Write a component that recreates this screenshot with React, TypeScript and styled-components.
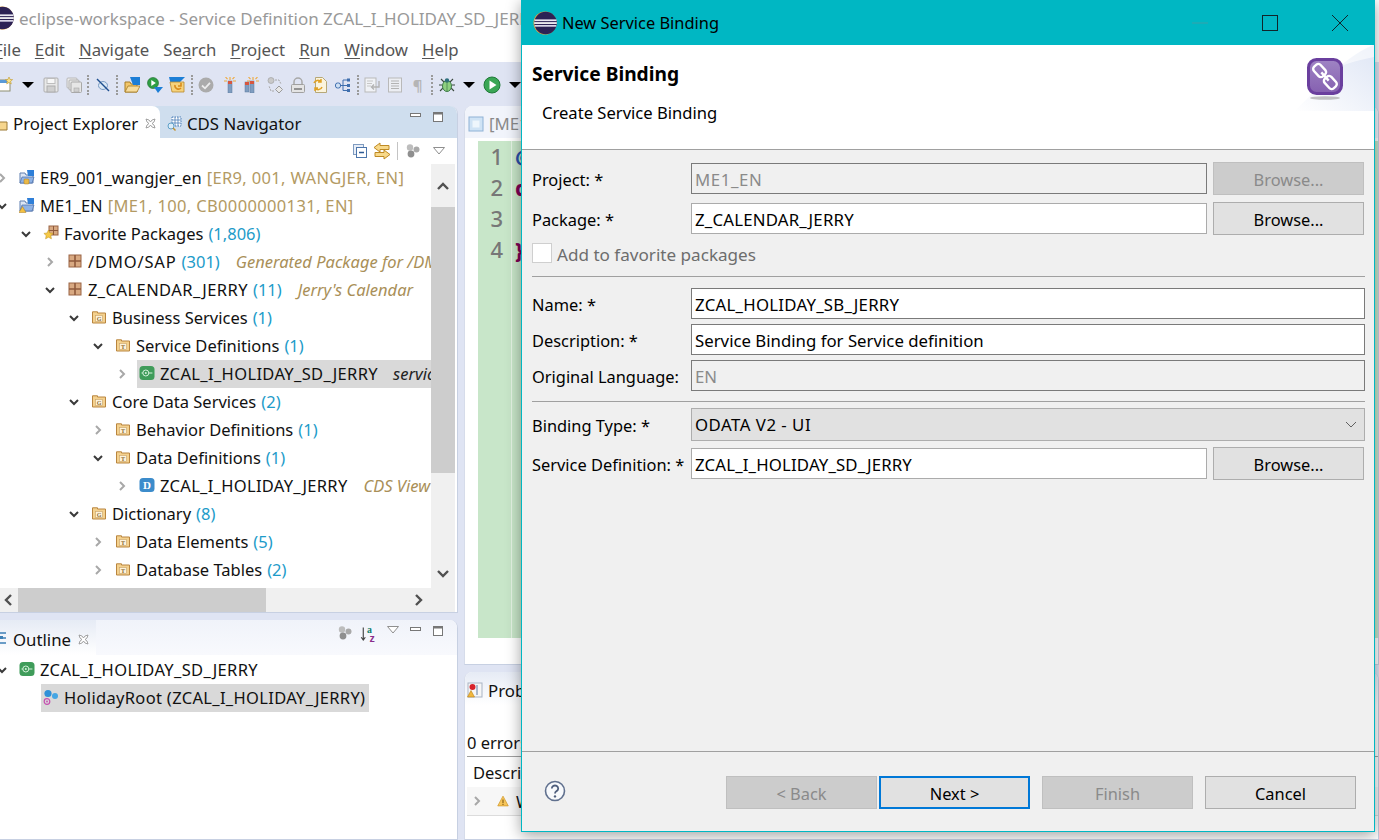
import React from "react";
import styled, { createGlobalStyle } from "styled-components";

const GlobalStyle = createGlobalStyle`
  html, body { margin: 0; padding: 0; background: #dfe4f3; }
  body { font-family: "Noto Sans", "Open Sans", sans-serif; font-size: 16.5px; color: #111; }
`;

const Page = styled.div`
  position: relative;
  width: 1379px;
  height: 840px;
  overflow: hidden;
  display: flex;
  flex-direction: column;
  background: #dfe4f3;
`;

/* ---------- workbench chrome ---------- */

const TitleBar = styled.div`
  height: 36px;
  background: #fff;
  display: flex;
  align-items: center;
  gap: 5px;
  font-size: 17px;
  color: #999;
  white-space: nowrap;
  overflow: hidden;
  svg { margin-left: -10px; }
`;

const MenuBar = styled.div`
  height: 26px;
  background: #fff;
  display: flex;
  align-items: center;
  gap: 14px;
  font-size: 16.8px;
  color: #555;
  span:first-child { margin-left: -6px; }
  u { text-underline-offset: 2px; }
`;

const Toolbar = styled.div`
  height: 44px;
  box-sizing: border-box;
  padding-top: 2px;
  display: flex;
  align-items: center;
  margin-left: -6px;
`;

const ToolSlot = styled.span`
  width: 22.8px;
  height: 22px;
  flex: none;
  display: flex;
  align-items: center;
  justify-content: center;
`;

const ToolSep = styled.span`
  width: 6.2px;
  height: 20px;
  flex: none;
  display: flex;
  justify-content: center;
  &::before {
    content: "";
    border-left: 2px dotted #9a9a9a;
  }
`;

const Pilcrow = styled.span`
  font-size: 15px;
  font-weight: 700;
  color: #b5b5b5;
`;

const Workspace = styled.div`
  flex: 1;
  min-height: 0;
  display: grid;
  grid-template-columns: 458px 1fr;
  gap: 6px;
`;

const Column = styled.div<{ $gap: number }>`
  display: flex;
  flex-direction: column;
  min-height: 0;
  min-width: 0;
  gap: ${({ $gap }) => $gap}px;
`;

const Panel = styled.section<{ $h?: number }>`
  ${({ $h }) => ($h ? `height: ${$h}px; flex: none;` : "flex: 1;")}
  min-height: 0;
  background: #fff;
  border-right: 1px solid #c7d0e2;
  border-bottom: 1px solid #c7d0e2;
  border-top-right-radius: 8px;
  box-sizing: border-box;
  display: flex;
  flex-direction: column;
  overflow: hidden;
`;

const EditorPanel = styled(Panel)`
  border-left: 1px solid #d6dcea;
  border-top-left-radius: 8px;
`;

const TabStrip = styled.div<{ $bg: string; $h: number }>`
  height: ${({ $h }) => $h}px;
  flex: none;
  display: flex;
  align-items: stretch;
  background: ${({ $bg }) => $bg};
`;

const Tab = styled.div<{ $active?: boolean; $bg?: string; $w: number; $pad?: number }>`
  width: ${({ $w }) => $w}px;
  box-sizing: border-box;
  flex: none;
  display: flex;
  align-items: center;
  gap: 5px;
  padding-top: 3px;
  padding-left: ${({ $pad }) => $pad || 0}px;
  white-space: nowrap;
  font-size: 16.8px;
  background: ${({ $active, $bg }) => $bg || ($active ? "#fff" : "transparent")};
  border-top-right-radius: ${({ $active }) => ($active ? "8px" : "0")};
`;

const TabClose = styled.span`
  margin-left: 2px;
  display: flex;
`;

const ViewActions = styled.div<{ $top: number }>`
  margin-left: auto;
  display: flex;
  align-items: flex-start;
  padding: ${({ $top }) => $top}px 13px 0 0;
  gap: 10px;
`;

const ViewBar = styled.div`
  height: 26px;
  flex: none;
  display: flex;
  justify-content: flex-end;
  align-items: center;
  padding-right: 11px;
  gap: 5px;
`;

const ViewBarSep = styled.span`
  width: 1px;
  height: 18px;
  background: #c4c4c4;
  margin: 0 2px 0 1px;
`;

const ViewBarMenu = styled.span`
  margin-left: 6px;
  display: flex;
`;

/* ---------- tree ---------- */

const TreeArea = styled.div`
  flex: 1;
  min-height: 0;
  display: grid;
  grid-template-columns: 431px 24px;
`;

const Tree = styled.div`
  min-width: 0;
  overflow: hidden;
`;

const Row = styled.div<{ $level: number }>`
  height: 28px;
  display: flex;
  align-items: center;
  margin-left: -6px;
  padding-left: ${({ $level }) => $level * 24}px;
  white-space: nowrap;
`;

const Toggle = styled.span`
  width: 16px;
  flex: none;
  display: flex;
  justify-content: center;
  margin-right: 2px;
`;

const Item = styled.span<{ $selected?: boolean; $fill?: boolean }>`
  height: 28px;
  box-sizing: border-box;
  margin-left: 5px;
  padding: 0 4px 2px 2px;
  display: flex;
  align-items: center;
  overflow: hidden;
  flex: ${({ $fill }) => ($fill ? "1" : "none")};
  background: ${({ $selected }) => ($selected ? "#d9d9d9" : "transparent")};
`;

const ItemIcon = styled.span`
  width: 16px;
  margin-right: 5px;
  flex: none;
  display: flex;
  justify-content: center;
`;

const Name = styled.span<{ $track?: number }>`
  letter-spacing: ${({ $track }) => $track || 0}px;
`;

const Count = styled.span`
  color: #1d9bc9;
  margin-left: 5px;
`;

const Note = styled.span<{ $italic?: boolean }>`
  color: ${({ $italic }) => ($italic ? "#a98f58" : "#b39a63")};
  font-style: ${({ $italic }) => ($italic ? "italic" : "normal")};
  letter-spacing: ${({ $italic }) => ($italic ? "0" : ".35px")};
  margin-left: ${({ $italic }) => ($italic ? "16px" : "5px")};
`;

const StrongNote = styled.span`
  color: #222;
  font-style: italic;
  margin-left: 15px;
`;

const VScroll = styled.div`
  background: #f0f0f0;
  display: flex;
  flex-direction: column;
  height: 424px;
`;

const ScrollButton = styled.div`
  height: 43px;
  flex: none;
  display: flex;
  align-items: center;
  justify-content: center;
`;

const VThumb = styled.div`
  height: 266px;
  background: #cdcdcd;
`;

const VRest = styled.div`
  flex: 1;
  display: flex;
  align-items: flex-end;
  justify-content: center;
  padding-bottom: 7px;
`;

const HScroll = styled.div`
  height: 24px;
  width: 455px;
  flex: none;
  background: #f0f0f0;
  display: flex;
  align-items: center;
`;

const HButton = styled.div`
  width: 18px;
  flex: none;
  display: flex;
  justify-content: center;
`;

const HThumb = styled.div`
  width: 248px;
  height: 24px;
  background: #cdcdcd;
`;

const HRest = styled.div`
  flex: 1;
  display: flex;
  justify-content: flex-end;
  padding-right: 30px;
`;

const OutlineTree = styled.div`
  padding-top: 1px;
`;

/* ---------- editor and problems ---------- */

const EditorTabText = styled.span`
  color: #8a8a8a;
`;

const EditorBody = styled.div`
  flex: 1;
  min-height: 0;
  padding: 3px 0 26px 13px;
`;

const Ruler = styled.div`
  height: 100%;
  background: linear-gradient(to right, #c8e6c9 33px, #e3f2e3 33px, #e3f2e3 34px, #c8e6c9 34px);
  display: grid;
  grid-template-columns: 34px 1fr;
  grid-auto-rows: 31px;
  font-size: 22px;
  font-weight: 500;
`;

const LineNo = styled.div`
  color: #777;
  text-align: right;
  padding-right: 9px;
  line-height: 31px;
`;

const Code = styled.div<{ $color: string }>`
  color: ${({ $color }) => $color};
  padding-left: 3px;
  line-height: 31px;
  font-weight: 700;
`;

const ProblemsInfo = styled.div`
  margin: 24px 0 0 2px;
  height: 27px;
  border-bottom: 1px solid #a0a0a0;
  font-size: 16.5px;
  line-height: 28px;
  white-space: nowrap;
`;

const ProblemsHead = styled.div`
  height: 30px;
  padding-left: 8px;
  display: flex;
  align-items: center;
`;

const ProblemsRow = styled.div`
  height: 28px;
  margin-left: 2px;
  background: #f7f7f7;
  border-bottom: 1px solid #dcdcdc;
  display: flex;
  align-items: center;
  gap: 7px;
  padding-left: 4px;
  white-space: nowrap;
  svg + svg { margin-left: 7px; }
`;

const Gradient = "linear-gradient(180deg, #e6ebf5 0%, #fff 100%)";

/* ---------- dialog window ---------- */

const Dialog = styled.div`
  position: absolute;
  left: 521px;
  top: 0;
  width: 854px;
  height: 832px;
  box-sizing: border-box;
  border: 1px solid #00b7c3;
  border-top: 0;
  background: #f0f0f0;
  box-shadow: 0 3px 14px rgba(0, 0, 0, 0.38);
  display: flex;
  flex-direction: column;
  font-size: 16.4px;
  color: #000;
`;

const DialogTitle = styled.div`
  height: 45px;
  flex: none;
  margin: 0 -1px;
  background: #00b7c3;
  display: flex;
  align-items: center;
  padding-left: 12px;
  gap: 5px;
`;

const WinControls = styled.div`
  margin-left: auto;
  display: flex;
  align-self: stretch;
`;

const WinButton = styled.span`
  width: 70px;
  display: flex;
  align-items: center;
  justify-content: center;
`;

const DialogHeader = styled.div`
  height: 105px;
  flex: none;
  box-sizing: border-box;
  background: #fff;
  border-bottom: 1px solid #a0a0a0;
  display: flex;
  justify-content: space-between;
  align-items: flex-start;
`;

const HeaderText = styled.div`
  padding: 16px 0 0 10px;
`;

const HeaderTitle = styled.div`
  font-weight: 700;
  font-size: 19.2px;
  line-height: 26px;
`;

const HeaderSub = styled.div`
  margin: 13px 0 0 10px;
  font-size: 16.6px;
  line-height: 26px;
`;

const Form = styled.div`
  flex: 1;
  min-height: 0;
  padding: 0 9px 0 10px;
`;

const Group = styled.div<{ $top: number; $gap: number }>`
  margin-top: ${({ $top }) => $top}px;
  display: flex;
  flex-direction: column;
  gap: ${({ $gap }) => $gap}px;
`;

const FieldRow = styled.div<{ $h: number; $browse?: boolean }>`
  height: ${({ $h }) => $h}px;
  display: flex;
  align-items: center;
  gap: 6px;
  padding-right: ${({ $browse }) => ($browse ? "1px" : "0")};
`;

const FieldLabel = styled.label`
  width: 159px;
  margin-right: -6px;
  padding-top: 1px;
  flex: none;
  white-space: nowrap;
`;

const TextBox = styled.div<{ $disabled?: boolean; $strong?: boolean; $track?: number }>`
  flex: 1;
  height: 31px;
  box-sizing: border-box;
  border: 1px solid ${({ $strong }) => ($strong ? "#7a7a7a" : "#ababab")};
  background: ${({ $disabled }) => ($disabled ? "#f0f0f0" : "#fff")};
  color: ${({ $disabled }) => ($disabled ? "#8a8a8a" : "#000")};
  padding-left: 3px;
  font-size: 16.8px;
  letter-spacing: ${({ $track }) => $track || 0}px;
  line-height: 31px;
  white-space: nowrap;
`;

const PushButton = styled.button<{ $default?: boolean }>`
  box-sizing: border-box;
  flex: none;
  height: 33px;
  width: 151px;
  padding: 1px 0 0;
  font: inherit;
  color: #000;
  background: #e1e1e1;
  border: ${({ $default }) => ($default ? "2px solid #0078d7" : "1px solid #adadad")};
  &:disabled {
    background: #ccc;
    border-color: #bfbfbf;
    color: #8a8a8a;
  }
`;

const CheckRow = styled.div`
  margin-top: 1px;
  height: 20px;
  display: flex;
  align-items: center;
  gap: 5px;
  color: #6d6d6d;
  font-size: 17.1px;
`;

const CheckText = styled.span`
  padding-top: 3px;
  white-space: nowrap;
`;

const CheckBox = styled.span`
  width: 20px;
  height: 20px;
  box-sizing: border-box;
  background: #fff;
  border: 1px solid #cfcfcf;
`;

const Divider = styled.div<{ $top: number }>`
  height: 1px;
  margin-top: ${({ $top }) => $top}px;
  background: #a0a0a0;
`;

const Combo = styled.div`
  flex: 1;
  height: 33px;
  box-sizing: border-box;
  background: #e1e1e1;
  border: 1px solid #adadad;
  padding: 0 7px 0 3px;
  display: flex;
  align-items: center;
  justify-content: space-between;
  font-size: 16.8px;
  letter-spacing: .5px;
`;

const DialogFooter = styled.div`
  height: 80px;
  flex: none;
  box-sizing: border-box;
  border-top: 1px solid #a0a0a0;
  padding: 24px 18px 0 22px;
  display: flex;
  align-items: flex-start;
`;

const HelpMark = styled.span`
  margin-top: 4px;
  display: flex;
`;

const ButtonBar = styled.div`
  margin-left: auto;
  display: flex;
  gap: 12px;
`;

const ButtonPair = styled.div`
  display: flex;
  gap: 2px;
`;

/* ---------- icons ---------- */

const Ico = styled.svg`
  width: 16px;
  height: 16px;
  flex: none;
  display: block;
`;

const ClippedIco = styled(Ico)`
  margin-left: -8px;
`;

const SmallIco = styled(Ico)`
  width: 12px;
  height: 12px;
`;

const SortGlyph = styled.svg`
  width: 18px;
  height: 18px;
  flex: none;
  margin-right: 1px;
`;

const MenuCluster = styled.span`
  display: flex;
  align-items: flex-start;
  gap: 7px;
`;

const EclipseLogo = () => (
  <svg width="24" height="24" viewBox="0 0 24 24">
    <circle cx="12" cy="12" r="11.5" fill="#e8a33d" />
    <circle cx="12.6" cy="12" r="11.2" fill="#2c2255" />
    <rect x="1.5" y="8.4" width="22" height="1.7" fill="#e9e7f2" />
    <rect x="1.2" y="11.2" width="22.6" height="1.7" fill="#fff" />
    <rect x="1.7" y="14" width="21.6" height="1.7" fill="#d9d6e8" />
  </svg>
);

const Chevron = ({ open, dark }: { open?: boolean; dark?: boolean }) => (
  <svg width="12" height="12" viewBox="0 0 12 12">
    <path
      d={open ? "M2 4l4 4 4-4" : "M4 2l4 4-4 4"}
      fill="none"
      stroke={open || dark ? "#3a3a3a" : "#a8a8a8"}
      strokeWidth="2"
    />
  </svg>
);

const ScrollArrow = ({ d }: { d: string }) => (
  <svg width="14" height="14" viewBox="0 0 14 14">
    <path d={d} fill="none" stroke="#505050" strokeWidth="2.4" />
  </svg>
);

const FolderLetter = ({ letter }: { letter: string }) => (
  <Ico viewBox="0 0 16 16">
    <path d="M1.5 4V2.8h5V4h8v10h-13z" fill="#f4d18e" stroke="#b9853e" />
    <rect x="4.5" y="6.5" width="7" height="6" fill="#fdf3dc" stroke="#c9a468" strokeWidth=".6" />
    <text x="8" y="11.6" fontSize="6" fontFamily="Liberation Serif, serif" fontWeight="700" textAnchor="middle" fill="#8a6a30">
      {letter}
    </text>
  </Ico>
);

const PackageIcon = () => (
  <Ico viewBox="0 0 16 16">
    <rect x="2" y="2" width="12" height="12" fill="#d8a982" stroke="#9a6444" />
    <path d="M8 2v12M2 8h12" stroke="#8f5a3c" strokeWidth="1.6" />
  </Ico>
);

const FavoriteIcon = () => (
  <Ico viewBox="0 0 16 16">
    <rect x="6" y="1" width="9" height="9" fill="#d8a982" stroke="#9a6444" />
    <path d="M10.5 1v9M6 5.5h9" stroke="#8f5a3c" />
    <path d="M5.5 5l1.4 3 3.2.4-2.3 2.2.6 3.2-2.9-1.6-2.9 1.6.6-3.2L.9 8.4 4.1 8z" fill="#f6c945" stroke="#c59a2a" strokeWidth=".6" />
  </Ico>
);

const ProjectIcon = ({ warn }: { warn?: boolean }) => (
  <Ico viewBox="0 0 16 16">
    <path d="M1 4h5l1 2h7v8H1z" fill="#dce6f5" stroke="#5f7fb0" />
    <path d="M8 1h7v6H9z" fill="#2f7fd8" />
    <path d="M3 8h12l-2 6H1z" fill="#8fb3e6" stroke="#4a6ea8" strokeWidth=".7" />
    {warn ? (
      <path d="M3.5 9.5L7 15.5H0z" fill="#f3c143" stroke="#a87a1e" strokeWidth=".5" />
    ) : (
      <rect x="5" y="10" width="5" height="5" rx="1" fill="#e9b949" stroke="#a87a1e" strokeWidth=".5" />
    )}
  </Ico>
);

const ServiceIcon = () => (
  <Ico viewBox="0 0 16 16">
    <rect x=".5" y="1" width="15" height="14" rx="3.5" fill="#3f9c5a" />
    <circle cx="6.8" cy="8" r="3" fill="none" stroke="#d3f0da" />
    <circle cx="6.8" cy="8" r="1" fill="#d3f0da" />
    <path d="M2.5 8h1.4M9.8 8h3.6" stroke="#d3f0da" />
  </Ico>
);

const DataDefIcon = () => (
  <Ico viewBox="0 0 16 16">
    <rect x=".5" y="1" width="15" height="14" rx="3.5" fill="#3c8ccb" />
    <text x="8" y="12" fontSize="11" fontWeight="700" fontFamily="Liberation Serif, serif" textAnchor="middle" fill="#fff">
      D
    </text>
  </Ico>
);

const HolidayIcon = () => (
  <Ico viewBox="0 0 16 16">
    <circle cx="5" cy="4.5" r="3.6" fill="#2f90d8" />
    <circle cx="12" cy="7" r="3" fill="#45a6e4" />
    <circle cx="4" cy="12.5" r="2.8" fill="none" stroke="#c650b0" strokeWidth="1.2" />
    <circle cx="4" cy="12.5" r=".9" fill="#c650b0" />
  </Ico>
);

const FolderTab = () => (
  <ClippedIco viewBox="0 0 16 16">
    <path d="M1 4h5l1 2h8v8H1z" fill="#f6d68e" stroke="#9c7a34" />
  </ClippedIco>
);

const CdsIcon = () => (
  <Ico viewBox="0 0 16 16">
    <path d="M6 1h9v9H6z" fill="#fff" stroke="#4b7fb8" strokeDasharray="1.5 1" />
    <path d="M9 1v9M12 1v9M6 4h9M6 7h9" stroke="#4b7fb8" strokeWidth=".8" />
    <circle cx="5" cy="10" r="3" fill="#dcecf8" stroke="#5ea0c8" />
    <path d="M7 12l2.5 2.5" stroke="#c28f2e" strokeWidth="1.4" />
  </Ico>
);

const OutlineTabIcon = () => (
  <ClippedIco viewBox="0 0 16 16">
    <path d="M2 2h5M2 7h12M9 7v0M8 12h6M8 2h6" stroke="#3d7fb5" strokeWidth="1.6" />
    <rect x="8" y="5" width="3" height="3" fill="#3d7fb5" />
  </ClippedIco>
);

const CloseX = () => (
  <svg width="11" height="11" viewBox="0 0 11 11">
    <path d="M1 1l3 1 1.5 2 1.5-2 3-1-1 3-2 1.5 2 1.5 1 3-3-1-1.5-2-1.5 2-3 1 1-3 2-1.5-2-1.5z" fill="#fff" stroke="#8d8d8d" strokeWidth=".8" />
  </svg>
);

const MinIcon = () => (
  <svg width="12" height="12" viewBox="0 0 12 12">
    <rect x=".5" y="2.5" width="10" height="3" fill="#fff" stroke="#777" />
  </svg>
);

const MaxIcon = () => (
  <svg width="12" height="12" viewBox="0 0 12 12">
    <rect x="1.5" y="1.5" width="9" height="9" fill="#fff" stroke="#777" />
    <path d="M1.5 2.5h9" stroke="#777" strokeWidth="2" />
  </svg>
);

const MenuTriangle = () => (
  <svg width="14" height="10" viewBox="0 0 14 10">
    <path d="M1.5 1.5h11L7 8z" fill="#fff" stroke="#8f8f8f" />
  </svg>
);

const ClusterIcon = () => (
  <Ico viewBox="0 0 16 16">
    <circle cx="5" cy="4.5" r="3.2" fill="#bdbdbd" />
    <circle cx="11.5" cy="6.5" r="3" fill="#a9a9a9" />
    <circle cx="6" cy="11" r="3.4" fill="#8f8f8f" />
  </Ico>
);

const SortIcon = () => (
  <SortGlyph viewBox="0 0 22 22">
    <path d="M4 3v15M1.5 15L4 18.5 6.5 15" fill="none" stroke="#444" strokeWidth="1.4" />
    <text x="8.5" y="10" fontSize="12" fontWeight="700" fontFamily="Liberation Serif, serif" fill="#0e7c6b">a</text>
    <text x="11.5" y="21" fontSize="13" fontWeight="700" fontFamily="Liberation Sans, sans-serif" fill="#8a2d8c">z</text>
  </SortGlyph>
);

const CollapseIcon = () => (
  <Ico viewBox="0 0 16 16">
    <rect x="1.5" y="1.5" width="10" height="10" fill="#e8eef7" stroke="#7f9bc0" />
    <rect x="4.5" y="4.5" width="10" height="10" fill="#fff" stroke="#4d76ab" />
    <path d="M7 9.5h5" stroke="#2d5a94" strokeWidth="1.4" />
  </Ico>
);

const LinkIcon = () => (
  <svg width="18" height="18" viewBox="0 0 18 18">
    <path d="M7 1L1 5.5 7 10V7.5h9v-4H7z" fill="#f8d98a" stroke="#bf8a24" />
    <path d="M11 8l6 4.5-6 4.5v-2.5H2v-4h9z" fill="#f8d98a" stroke="#bf8a24" />
  </svg>
);

const NewIcon = () => (
  <Ico viewBox="0 0 16 16">
    <rect x="1" y="3" width="12" height="11" fill="#fff" stroke="#8e8e70" />
    <rect x="1" y="3" width="12" height="3" fill="#5a9ad8" />
    <path d="M12 0l1 2.4 2.6.2-2 1.7.7 2.6L12 5.5 9.7 6.9l.7-2.6-2-1.7 2.6-.2z" fill="#fbe38a" stroke="#c29a2e" strokeWidth=".6" />
  </Ico>
);

const BlackDrop = () => (
  <svg width="12" height="6" viewBox="0 0 12 6">
    <path d="M0 0h12L6 6z" fill="#000" />
  </svg>
);

const SaveIcon = () => (
  <Ico viewBox="0 0 16 16">
    <rect x="1" y="1" width="14" height="14" rx="1" fill="#e8e8e8" stroke="#aeaeae" />
    <rect x="4" y="1.5" width="8" height="5" fill="#f7f7f7" stroke="#bdbdbd" />
    <rect x="4" y="9" width="8" height="6" fill="#cfcfcf" stroke="#aeaeae" />
  </Ico>
);

const SaveAllIcon = () => (
  <Ico viewBox="0 0 16 16">
    <rect x="1" y="1" width="10" height="10" rx="1" fill="#ededed" stroke="#b8b8b8" />
    <rect x="3" y="3" width="10" height="10" rx="1" fill="#e8e8e8" stroke="#b0b0b0" />
    <rect x="5" y="5" width="10.5" height="10.5" rx="1" fill="#e6e6e6" stroke="#a8a8a8" />
    <rect x="8" y="11" width="5" height="4" fill="#cfcfcf" stroke="#a8a8a8" strokeWidth=".6" />
  </Ico>
);

const MarkIcon = () => (
  <Ico viewBox="0 0 16 16">
    <ellipse cx="8" cy="8.5" rx="4.5" ry="4" fill="#dbe8f5" stroke="#7b9cc4" />
    <path d="M2 2l12 12" stroke="#1f4f8f" strokeWidth="1.4" />
  </Ico>
);

const OpenFolderIcon = () => (
  <Ico viewBox="0 0 16 16">
    <path d="M1 5h5l1 2h6v8H1z" fill="#f2c66b" stroke="#a67c25" />
    <path d="M4 9h12l-3 6H1z" fill="#f7dc9c" stroke="#a67c25" strokeWidth=".8" />
    <path d="M6 0h10v8H9z" fill="#1c7ed6" />
  </Ico>
);

const RunLastIcon = () => (
  <Ico viewBox="0 0 16 16">
    <circle cx="6" cy="6" r="5.5" fill="#2f9e44" stroke="#1c6b2c" strokeWidth=".6" />
    <path d="M4.3 3l4.500 3-4.500 3z" fill="#fff" />
    <path d="M7 10h9l-5 6z" fill="#1c7ed6" />
  </Ico>
);

const SyncFolderIcon = () => (
  <Ico viewBox="0 0 16 16">
    <path d="M0 0h16l-8 8H2z" fill="#1c7ed6" />
    <path d="M1 5h14v10H3z" fill="#f6d27c" stroke="#b7892c" strokeWidth=".8" />
    <path d="M6 8a3.5 3.5 0 0 0 6 3M12 6v3H9" fill="none" stroke="#d98b1b" strokeWidth="1.6" />
  </Ico>
);

const CheckGreyIcon = () => (
  <Ico viewBox="0 0 16 16">
    <circle cx="8" cy="8" r="7.5" fill="#ababab" />
    <path d="M4 8.5l3 2.8 5-5.500" fill="none" stroke="#ececec" strokeWidth="1.8" />
  </Ico>
);

const Sparks = () => (
  <path d="M9 0v3M9 7v2M3 4h3M12 4h3M4.5 0l2 2.2M13.5 0l-2 2.2" stroke="#efa838" strokeWidth="1.1" />
);

const WandIcon = () => (
  <Ico viewBox="0 0 16 16">
    <Sparks />
    <rect x="7" y="4" width="4" height="12" fill="#7f9dc0" stroke="#5c7a9c" strokeWidth=".5" />
    <rect x="7" y="4" width="4" height="3" fill="#d8563e" />
  </Ico>
);

const Wand2Icon = () => (
  <Ico viewBox="0 0 16 16">
    <Sparks />
    <rect x="1" y="5" width="4" height="10" fill="#7f9dc0" stroke="#5c7a9c" strokeWidth=".5" />
    <rect x="6" y="4" width="4" height="12" fill="#7f9dc0" stroke="#5c7a9c" strokeWidth=".5" />
    <rect x="1" y="5" width="4" height="3" fill="#d8563e" />
    <rect x="6" y="4" width="4" height="3" fill="#d8563e" />
  </Ico>
);

const NodesIcon = () => (
  <Ico viewBox="0 0 16 16">
    <circle cx="4" cy="3.5" r="3" fill="#c9c9c9" stroke="#9a9a9a" strokeWidth=".6" />
    <path d="M12 9l3.5 3.5L12 16l-3.5-3.5z" fill="#e7e7e7" stroke="#9a9a9a" />
    <path d="M8 3h4l2 4M7 14H4L2 9" fill="none" stroke="#a8a8a8" strokeDasharray="2 1" />
  </Ico>
);

const LockIcon = () => (
  <Ico viewBox="0 0 16 16">
    <path d="M4 8V5a4 4 0 0 1 8 0v3" fill="none" stroke="#a8a8a8" strokeWidth="1.5" />
    <rect x="1.5" y="7.5" width="13" height="8" rx="1" fill="#e4e4e4" stroke="#a0a0a0" />
    <path d="M4 12h8" stroke="#8a8a8a" strokeWidth="1.8" />
  </Ico>
);

const DocSyncIcon = () => (
  <Ico viewBox="0 0 16 16">
    <path d="M3.5.5h7l4 4v11h-11z" fill="#fbf4dd" stroke="#b6a878" />
    <path d="M2 6a4 4 0 0 1 7-1M9 2v3H6M10 10a4 4 0 0 1-7 1M3 14v-3h3" fill="none" stroke="#e0a125" strokeWidth="1.5" />
  </Ico>
);

const TreeOutIcon = () => (
  <Ico viewBox="0 0 16 16">
    <rect x=".5" y="6" width="5" height="5" rx="2" fill="#cfe0f3" stroke="#3f6fae" />
    <path d="M5.5 8.5h8M8 8.5V3h5M8 8.5v5h5" fill="none" stroke="#3f6fae" />
    <rect x="12" y="1.5" width="3" height="3" fill="#3f6fae" />
    <rect x="12" y="7" width="3" height="3" fill="#3f6fae" />
    <rect x="12" y="12" width="3" height="3" fill="#3f6fae" />
  </Ico>
);

const DocArrowIcon = () => (
  <Ico viewBox="0 0 16 16">
    <rect x="1" y="1" width="11" height="14" fill="#f0f2f6" stroke="#b9b9b9" />
    <path d="M3 4h6M3 6.5h5M3 9h4" stroke="#c6c6c6" />
    <path d="M15 4v6H8M10 7.5L7.5 10l2.5 2.5" fill="none" stroke="#b3b3b3" strokeWidth="1.4" />
  </Ico>
);

const ListDocIcon = () => (
  <Ico viewBox="0 0 16 16">
    <rect x="1.5" y="1" width="13" height="14" fill="#eceef3" stroke="#b9b9b9" />
    <path d="M4 4h8M4 6.5h8M4 9h8M4 11.5h8" stroke="#b3b3b3" />
  </Ico>
);

const BugIcon = () => (
  <svg width="18" height="18" viewBox="0 0 18 18">
    <path d="M3 3l3 3M15 3l-3 3M1 9h3M17 9h-3M2 15l3-3M16 15l-3-3" stroke="#3b4a3f" strokeWidth="1.1" />
    <ellipse cx="9" cy="10" rx="4.5" ry="5.5" fill="#8ed07f" stroke="#3f7a4a" />
    <circle cx="9" cy="4.5" r="2.2" fill="#2e6f7d" />
    <path d="M9 5v10" stroke="#3f7a4a" strokeWidth=".7" />
  </svg>
);

const PlayIcon = () => (
  <svg width="18" height="18" viewBox="0 0 18 18">
    <circle cx="9" cy="9" r="8" fill="#3aa655" stroke="#1f7a38" />
    <path d="M6.5 4.5l7 4.5-7 4.5z" fill="#fff" />
  </svg>
);

const ProblemsIcon = () => (
  <Ico viewBox="0 0 16 16">
    <rect x="1" y="1" width="14" height="14" fill="#f6f6f6" stroke="#a9b4c4" />
    <circle cx="5.5" cy="5" r="3" fill="#d8232a" />
    <path d="M4 8.5l3.5 6.5H.5z" fill="#f1b73c" stroke="#b88214" strokeWidth=".6" />
    <path d="M10 3v10" stroke="#8aa0bc" strokeWidth="1.4" />
  </Ico>
);

const WarnIcon = () => (
  <SmallIco viewBox="0 0 16 16">
    <path d="M8 1.5l7 13H1z" fill="#f7c65a" stroke="#d29a2a" strokeLinejoin="round" />
    <path d="M8 6v4.5M8 11.8v1.4" stroke="#7a5510" strokeWidth="1.4" />
  </SmallIco>
);

const EditorTabIcon = () => (
  <Ico viewBox="0 0 16 16">
    <rect x="1" y="1" width="14" height="14" fill="#cfe3f5" stroke="#8fb2d6" />
    <rect x="4.5" y="4.5" width="7" height="7" fill="#eef6fc" />
  </Ico>
);

const WinGlyph = ({ kind }: { kind: "min" | "max" | "close" }) => (
  <svg width="18" height="18" viewBox="0 0 18 18">
    {kind === "min" && <path d="M1 9h16" stroke="#3aa0a8" strokeWidth="1" />}
    {kind === "max" && <rect x="1.5" y="1.5" width="15" height="15" fill="none" stroke="#10252a" />}
    {kind === "close" && <path d="M1 1l16 16M17 1L1 17" stroke="#10252a" />}
  </svg>
);

const BindingBanner = () => (
  <svg width="80" height="66" viewBox="0 0 80 66">
    <defs>
      <linearGradient id="blob" x1="0" y1="1" x2="1" y2="0">
        <stop offset="0" stopColor="#fff" />
        <stop offset="1" stopColor="#dfe6f5" />
      </linearGradient>
      <linearGradient id="tile" x1="0" y1="0" x2="0" y2="1">
        <stop offset="0" stopColor="#9f84c4" />
        <stop offset="1" stopColor="#8560b0" />
      </linearGradient>
    </defs>
    <path d="M0 66C22 48 44 14 80 0v66z" fill="url(#blob)" />
    <path d="M30 30C44 20 62 16 80 12V0C58 8 42 18 30 30z" fill="#fff" opacity=".55" />
    <ellipse cx="31" cy="53" rx="15" ry="1.8" fill="#a9a9a9" opacity=".7" />
    <rect x="14.5" y="14.5" width="33" height="34" rx="8" fill="url(#tile)" stroke="#6a3f9e" strokeWidth="3" />
    <g fill="none" stroke="#fff" strokeWidth="2.4" transform="rotate(-42 31 31.5)">
      <rect x="26.5" y="17" width="9" height="13" rx="3" />
      <rect x="26.5" y="33" width="9" height="13" rx="3" />
      <path d="M31 26v11" />
    </g>
  </svg>
);

const HelpIcon = () => (
  <svg width="22" height="22" viewBox="0 0 22 22">
    <circle cx="11" cy="11" r="9.5" fill="#f7f9fc" stroke="#60708e" strokeWidth="1.6" />
    <path d="M7.8 8.5a3.2 3 0 1 1 4.8 2.6c-1.100.7-1.600 1.200-1.600 2.500" fill="none" stroke="#4d5d7c" strokeWidth="1.8" />
    <circle cx="11" cy="16.4" r="1.2" fill="#4d5d7c" />
  </svg>
);

const ComboArrow = () => (
  <svg width="12" height="8" viewBox="0 0 12 8">
    <path d="M1 1l5 5 5-5" fill="none" stroke="#606060" />
  </svg>
);

/* ---------- data ---------- */

type Node = {
  level: number;
  open?: boolean;
  icon: React.ReactNode;
  name: string;
  track?: number;
  count?: string;
  note?: string;
  italic?: boolean;
  hint?: string;
  selected?: boolean;
};

const explorer: Node[] = [
  { level: 0, icon: <ProjectIcon />, name: "ER9_001_wangjer_en", note: "[ER9, 001, WANGJER, EN]" },
  { level: 0, open: true, icon: <ProjectIcon warn />, name: "ME1_EN", note: "[ME1, 100, CB0000000131, EN]" },
  { level: 1, open: true, icon: <FavoriteIcon />, name: "Favorite Packages", count: "(1,806)" },
  { level: 2, icon: <PackageIcon />, name: "/DMO/SAP", track: 0.85, count: "(301)", note: "Generated Package for /DMO/SAP", italic: true },
  { level: 2, open: true, icon: <PackageIcon />, name: "Z_CALENDAR_JERRY", track: 0.43, count: "(11)", note: "Jerry's Calendar", italic: true },
  { level: 3, open: true, icon: <FolderLetter letter="G" />, name: "Business Services", count: "(1)" },
  { level: 4, open: true, icon: <FolderLetter letter="T" />, name: "Service Definitions", count: "(1)" },
  { level: 5, icon: <ServiceIcon />, name: "ZCAL_I_HOLIDAY_SD_JERRY", track: 0.35, hint: "service", selected: true },
  { level: 3, open: true, icon: <FolderLetter letter="G" />, name: "Core Data Services", count: "(2)" },
  { level: 4, icon: <FolderLetter letter="T" />, name: "Behavior Definitions", count: "(1)" },
  { level: 4, open: true, icon: <FolderLetter letter="T" />, name: "Data Definitions", count: "(1)" },
  { level: 5, icon: <DataDefIcon />, name: "ZCAL_I_HOLIDAY_JERRY", track: 0.3, note: "CDS View", italic: true },
  { level: 3, open: true, icon: <FolderLetter letter="G" />, name: "Dictionary", count: "(8)" },
  { level: 4, icon: <FolderLetter letter="T" />, name: "Data Elements", count: "(5)" },
  { level: 4, icon: <FolderLetter letter="T" />, name: "Database Tables", count: "(2)" },
];

const lines: [string, string, string][] = [
  ["1", "@", "#2a4fa8"],
  ["2", "d", "#7f0055"],
  ["3", "", "#000"],
  ["4", "}", "#7f0055"],
];

const TreeRow = ({ node }: { node: Node }) => (
  <Row $level={node.level}>
    <Toggle>
      <Chevron open={node.open} />
    </Toggle>
    <Item $selected={node.selected} $fill>
      <ItemIcon>{node.icon}</ItemIcon>
      <Name $track={node.track}>{node.name}</Name>
      {node.count && <Count>{node.count}</Count>}
      {node.note && <Note $italic={node.italic}>{node.note}</Note>}
      {node.hint && <StrongNote>{node.hint}</StrongNote>}
    </Item>
  </Row>
);

export default function App() {
  return (
    <Page>
      <GlobalStyle />
      <TitleBar>
        <EclipseLogo />
        eclipse-workspace - Service Definition ZCAL_I_HOLIDAY_SD_JERRY
      </TitleBar>
      <MenuBar>
        <span><u>F</u>ile</span>
        <span><u>E</u>dit</span>
        <span><u>N</u>avigate</span>
        <span>Se<u>a</u>rch</span>
        <span><u>P</u>roject</span>
        <span><u>R</u>un</span>
        <span><u>W</u>indow</span>
        <span><u>H</u>elp</span>
      </MenuBar>
      <Toolbar>
        <ToolSlot><NewIcon /></ToolSlot>
        <ToolSlot><BlackDrop /></ToolSlot>
        <ToolSlot><SaveIcon /></ToolSlot>
        <ToolSlot><SaveAllIcon /></ToolSlot>
        <ToolSep />
        <ToolSlot><MarkIcon /></ToolSlot>
        <ToolSep />
        <ToolSlot><OpenFolderIcon /></ToolSlot>
        <ToolSlot><RunLastIcon /></ToolSlot>
        <ToolSlot><SyncFolderIcon /></ToolSlot>
        <ToolSep />
        <ToolSlot><CheckGreyIcon /></ToolSlot>
        <ToolSlot><WandIcon /></ToolSlot>
        <ToolSlot><Wand2Icon /></ToolSlot>
        <ToolSlot><NodesIcon /></ToolSlot>
        <ToolSlot><LockIcon /></ToolSlot>
        <ToolSlot><DocSyncIcon /></ToolSlot>
        <ToolSlot><TreeOutIcon /></ToolSlot>
        <ToolSep />
        <ToolSlot><DocArrowIcon /></ToolSlot>
        <ToolSlot><ListDocIcon /></ToolSlot>
        <ToolSlot><Pilcrow>¶</Pilcrow></ToolSlot>
        <ToolSep />
        <ToolSlot><BugIcon /></ToolSlot>
        <ToolSlot><BlackDrop /></ToolSlot>
        <ToolSlot><PlayIcon /></ToolSlot>
        <ToolSlot><BlackDrop /></ToolSlot>
      </Toolbar>

      <Workspace>
        <Column $gap={7}>
          <Panel $h={507}>
            <TabStrip $bg="#cfdeee" $h={32}>
              <Tab $active $w={160}>
                <FolderTab />
                Project Explorer
                <TabClose><CloseX /></TabClose>
              </Tab>
              <Tab $w={150} $pad={6}>
                <CdsIcon />
                CDS Navigator
              </Tab>
              <ViewActions $top={5}>
                <MinIcon />
                <MaxIcon />
              </ViewActions>
            </TabStrip>
            <ViewBar>
              <CollapseIcon />
              <LinkIcon />
              <ViewBarSep />
              <ClusterIcon />
              <ViewBarMenu><MenuTriangle /></ViewBarMenu>
            </ViewBar>
            <TreeArea>
              <Tree>
                {explorer.map((node) => (
                  <TreeRow key={node.name} node={node} />
                ))}
              </Tree>
              <VScroll>
                <ScrollButton><ScrollArrow d="M2 10l5-5 5 5" /></ScrollButton>
                <VThumb />
                <VRest><ScrollArrow d="M2 4l5 5 5-5" /></VRest>
              </VScroll>
            </TreeArea>
            <HScroll>
              <HButton><ScrollArrow d="M9 2L4 7l5 5" /></HButton>
              <HThumb />
              <HRest><ScrollArrow d="M5 2l5 5-5 5" /></HRest>
            </HScroll>
          </Panel>
          <Panel>
            <TabStrip $bg="linear-gradient(180deg, #f0f3fa 0%, #f8f9fd 100%)" $h={35}>
              <Tab $w={96} $bg={Gradient}>
                <OutlineTabIcon />
                Outline
                <TabClose><CloseX /></TabClose>
              </Tab>
              <ViewActions $top={5}>
                <MenuCluster>
                  <ClusterIcon />
                  <SortIcon />
                  <MenuTriangle />
                </MenuCluster>
                <MinIcon />
                <MaxIcon />
              </ViewActions>
            </TabStrip>
            <OutlineTree>
              <TreeRow
                node={{ level: 0, open: true, icon: <ServiceIcon />, name: "ZCAL_I_HOLIDAY_SD_JERRY", track: 0.35 }}
              />
              <Row $level={1}>
                <Toggle />
                <Item $selected>
                  <ItemIcon><HolidayIcon /></ItemIcon>
                  <Name $track={0.32}>HolidayRoot (ZCAL_I_HOLIDAY_JERRY)</Name>
                </Item>
              </Row>
            </OutlineTree>
          </Panel>
        </Column>

        <Column $gap={7}>
          <EditorPanel $h={559}>
            <TabStrip $bg="#f1f4fb" $h={32}>
              <Tab $w={200} $bg="transparent" $pad={3}>
                <EditorTabIcon />
                <EditorTabText>[ME1</EditorTabText>
              </Tab>
            </TabStrip>
            <EditorBody>
              <Ruler>
                {lines.map(([no, text, color]) => (
                  <React.Fragment key={no}>
                    <LineNo>{no}</LineNo>
                    <Code $color={color}>{text}</Code>
                  </React.Fragment>
                ))}
              </Ruler>
            </EditorBody>
          </EditorPanel>
          <EditorPanel>
            <TabStrip $bg={Gradient} $h={33}>
              <Tab $w={200} $bg="transparent" $pad={2}>
                <ProblemsIcon />
                Problems
              </Tab>
            </TabStrip>
            <ProblemsInfo>0 errors, 1 warning</ProblemsInfo>
            <ProblemsHead>Description</ProblemsHead>
            <ProblemsRow>
              <Chevron />
              <WarnIcon />
              Warnings
            </ProblemsRow>
          </EditorPanel>
        </Column>
      </Workspace>

      <Dialog>
        <DialogTitle>
          <EclipseLogo />
          New Service Binding
          <WinControls>
            <WinButton><WinGlyph kind="min" /></WinButton>
            <WinButton><WinGlyph kind="max" /></WinButton>
            <WinButton><WinGlyph kind="close" /></WinButton>
          </WinControls>
        </DialogTitle>
        <DialogHeader>
          <HeaderText>
            <HeaderTitle>Service Binding</HeaderTitle>
            <HeaderSub>Create Service Binding</HeaderSub>
          </HeaderText>
          <BindingBanner />
        </DialogHeader>
        <Form>
          <Group $top={12} $gap={7}>
            <FieldRow $h={33} $browse>
              <FieldLabel>Project: *</FieldLabel>
              <TextBox $disabled $strong $track={0.6}>ME1_EN</TextBox>
              <PushButton disabled>Browse...</PushButton>
            </FieldRow>
            <FieldRow $h={33} $browse>
              <FieldLabel>Package: *</FieldLabel>
              <TextBox $track={0.2}>Z_CALENDAR_JERRY</TextBox>
              <PushButton>Browse...</PushButton>
            </FieldRow>
            <CheckRow>
              <CheckBox />
              <CheckText>Add to favorite packages</CheckText>
            </CheckRow>
          </Group>
          <Divider $top={13} />
          <Group $top={11} $gap={5}>
            <FieldRow $h={31}>
              <FieldLabel>Name: *</FieldLabel>
              <TextBox $strong $track={0.25}>ZCAL_HOLIDAY_SB_JERRY</TextBox>
            </FieldRow>
            <FieldRow $h={31}>
              <FieldLabel>Description: *</FieldLabel>
              <TextBox $strong>Service Binding for Service definition</TextBox>
            </FieldRow>
            <FieldRow $h={31}>
              <FieldLabel>Original Language:</FieldLabel>
              <TextBox $disabled $strong>EN</TextBox>
            </FieldRow>
          </Group>
          <Divider $top={10} />
          <Group $top={6} $gap={6}>
            <FieldRow $h={33}>
              <FieldLabel>Binding Type: *</FieldLabel>
              <Combo>
                ODATA V2 - UI
                <ComboArrow />
              </Combo>
            </FieldRow>
            <FieldRow $h={33} $browse>
              <FieldLabel>Service Definition: *</FieldLabel>
              <TextBox $track={0.15}>ZCAL_I_HOLIDAY_SD_JERRY</TextBox>
              <PushButton>Browse...</PushButton>
            </FieldRow>
          </Group>
        </Form>
        <DialogFooter>
          <HelpMark><HelpIcon /></HelpMark>
          <ButtonBar>
            <ButtonPair>
              <PushButton disabled>&lt; Back</PushButton>
              <PushButton $default>Next &gt;</PushButton>
            </ButtonPair>
            <PushButton disabled>Finish</PushButton>
            <PushButton>Cancel</PushButton>
          </ButtonBar>
        </DialogFooter>
      </Dialog>
    </Page>
  );
}
